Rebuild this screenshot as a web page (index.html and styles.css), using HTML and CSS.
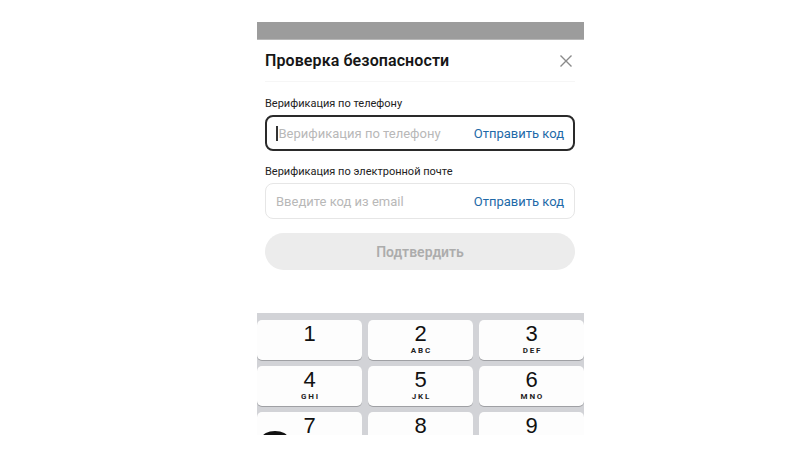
FILE: index.html
```html
<!DOCTYPE html>
<html lang="ru">
<head>
<meta charset="utf-8">
<title>Проверка безопасности</title>
<link rel="stylesheet" href="styles.css">
</head>
<body>
<div class="phone">
  <div class="statusbar"></div>
  <div class="sheet">
    <div class="header">
      <h1 class="title">Проверка безопасности</h1>
      <svg class="close" width="14" height="14" viewBox="0 0 14 14"><path d="M1.5 1.5L12.5 12.5M12.5 1.5L1.5 12.5" stroke="#8a8a8a" stroke-width="1.4" fill="none"/></svg>
    </div>
    <div class="field">
      <div class="label">Верификация по телефону</div>
      <div class="input active">
        <span class="caret"></span>
        <span class="placeholder">Верификация по телефону</span>
        <span class="send">Отправить код</span>
      </div>
    </div>
    <div class="field">
      <div class="label">Верификация по электронной почте</div>
      <div class="input">
        <span class="placeholder">Введите код из email</span>
        <span class="send">Отправить код</span>
      </div>
    </div>
    <div class="submit">Подтвердить</div>
  </div>
  <div class="keyboard">
    <div class="key"><span class="num">1</span></div>
    <div class="key"><span class="num">2</span><span class="letters">ABC</span></div>
    <div class="key"><span class="num">3</span><span class="letters">DEF</span></div>
    <div class="key"><span class="num">4</span><span class="letters">GHI</span></div>
    <div class="key"><span class="num">5</span><span class="letters">JKL</span></div>
    <div class="key"><span class="num">6</span><span class="letters">MNO</span></div>
    <div class="key"><span class="num">7</span></div>
    <div class="key"><span class="num">8</span></div>
    <div class="key"><span class="num">9</span></div>
    <span class="blob"></span>
  </div>
</div>
</body>
</html>
```
FILE: styles.css
```css
html, body {
  margin: 0;
  padding: 0;
  background: #ffffff;
}
body {
  font-family: Roboto, "Noto Sans", "Liberation Sans", sans-serif;
  color: #1a1a1a;
}
.phone {
  width: 327px;
  margin: 22px 0 0 257px;
}
.statusbar {
  height: 17px;
  background: #9c9c9c;
  border-bottom: 1px solid #b8b8b8;
}
.sheet {
  background: #fff;
  padding: 0 9px 0 8px;
  height: 273px;
}
.header {
  display: flex;
  align-items: center;
  justify-content: space-between;
  height: 41px;
  border-bottom: 1px solid #f6f6f6;
  margin-bottom: 15px;
}
.title {
  margin: 0;
  font-size: 16px;
  font-weight: 600;
  color: #161616;
  letter-spacing: 0.1px;
}
.close {
  margin-right: 2px;
}
.field {
  margin-bottom: 14px;
}
.label {
  font-size: 11px;
  color: #222;
  line-height: 13px;
  margin-bottom: 5px;
}
.input {
  height: 36px;
  box-sizing: border-box;
  border: 1px solid #e6e6e6;
  border-radius: 8px;
  display: flex;
  align-items: center;
  padding: 0 10px 0 10px;
}
.input.active {
  border: 2px solid #2a2a2a;
  padding-left: 9px;
  padding-right: 9px;
}
.caret {
  width: 1.5px;
  height: 15px;
  background: #333;
  margin-right: 1px;
}
.placeholder {
  flex: 1;
  font-size: 13px;
  color: #b8b8b8;
}
.send {
  font-size: 13px;
  color: #1e6aa8;
}
.submit {
  margin-top: 14px;
  height: 37px;
  border-radius: 19px;
  background: #ececec;
  color: #acacac;
  font-size: 14px;
  font-weight: 600;
  display: flex;
  align-items: center;
  justify-content: center;
}
.keyboard {
  position: relative;
  background: #d2d3d7;
  height: 122px;
  overflow: hidden;
  padding: 7px 1px 0 0;
  box-sizing: border-box;
  display: grid;
  grid-template-columns: 105px 105px 105px;
  column-gap: 6px;
  row-gap: 6px;
  grid-auto-rows: 40px;
}
.key {
  background: #fdfdfd;
  border-radius: 5px;
  box-shadow: 0 1px 0 #9fa0a4;
  display: flex;
  flex-direction: column;
  align-items: center;
  justify-content: flex-start;
  padding-top: 3px;
  line-height: 1;
}
.num {
  font-size: 22px;
  line-height: 22px;
  font-family: "Liberation Sans", Arial, sans-serif;
  color: #111;
}
.letters {
  font-size: 8px;
  font-weight: 700;
  letter-spacing: 1.8px;
  margin-top: 2px;
  padding-left: 1.8px;
  color: #222;
}
.blob {
  position: absolute;
  left: 5px;
  top: 118px;
  width: 26px;
  height: 14px;
  border-radius: 50%;
  background: #111;
}
```
